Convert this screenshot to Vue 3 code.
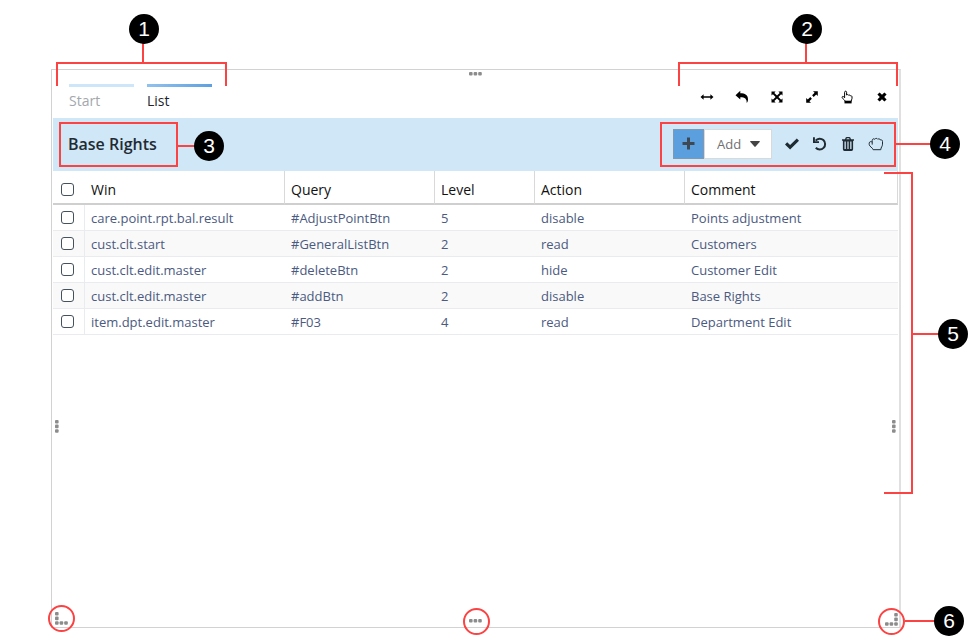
<script setup>
import { reactive, ref } from 'vue'

const tabs = ['Start', 'List']
const activeTab = ref('List')

const rows = reactive([
  { win: 'care.point.rpt.bal.result', query: '#AdjustPointBtn', level: 5, action: 'disable', comment: 'Points adjustment', checked: false },
  { win: 'cust.clt.start', query: '#GeneralListBtn', level: 2, action: 'read', comment: 'Customers', checked: false },
  { win: 'cust.clt.edit.master', query: '#deleteBtn', level: 2, action: 'hide', comment: 'Customer Edit', checked: false },
  { win: 'cust.clt.edit.master', query: '#addBtn', level: 2, action: 'disable', comment: 'Base Rights', checked: false },
  { win: 'item.dpt.edit.master', query: '#F03', level: 4, action: 'read', comment: 'Department Edit', checked: false }
])

const toggleAll = (event) => rows.forEach((row) => { row.checked = event.target.checked })

const handles = [
  { name: 'top', w: 13, h: 4, dots: [[0, 0], [1, 0], [2, 0]] },
  { name: 'bottom', w: 13, h: 4, dots: [[0, 0], [1, 0], [2, 0]] },
  { name: 'left', w: 4, h: 13, dots: [[0, 0], [0, 1], [0, 2]] },
  { name: 'right', w: 4, h: 13, dots: [[0, 0], [0, 1], [0, 2]] },
  { name: 'bottom-left', w: 13, h: 13, dots: [[0, 0], [0, 1], [0, 2], [1, 2], [2, 2]] },
  { name: 'bottom-right', w: 13, h: 13, dots: [[2, 0], [2, 1], [0, 2], [1, 2], [2, 2]] }
]
</script>

<template>
  <main class="page">
    <div class="frame">
      <section class="window">
        <header class="topbar">
          <nav class="tabs">
            <a
              v-for="tab in tabs"
              :key="tab"
              href="#"
              class="tab"
              :class="{ active: tab === activeTab }"
              @click.prevent="activeTab = tab"
            >{{ tab }}</a>
          </nav>
          <div class="controls">
            <button type="button" aria-label="Fit width">
              <svg width="14" height="14" viewBox="0 0 14 14"><path d="M0.5 7 3.6 4.2V6.2H10.4V4.2L13.5 7 10.4 9.8V7.8H3.6V9.8Z" /></svg>
            </button>
            <button type="button" aria-label="Back">
              <svg width="14" height="14" viewBox="0 0 14 14"><path d="M0.5 5.2 5.3 0.8V3.3C10 3.3 13 5 13 9.3 13 11 12.5 12.2 11.7 13 11.9 9 10 7.3 5.3 7.3V9.6Z" /></svg>
            </button>
            <button type="button" aria-label="Maximize">
              <svg width="14" height="14" viewBox="0 0 14 14"><path d="M1.5 1.5H5.6L4.3 2.9 7 5.6 9.7 2.9 8.4 1.5H12.5V5.6L11.1 4.3 8.4 7 11.1 9.7 12.5 8.4V12.5H8.4L9.7 11.1 7 8.4 4.3 11.1 5.6 12.5H1.5V8.4L2.9 9.7 5.6 7 2.9 4.3 1.5 5.6Z" /></svg>
            </button>
            <button type="button" aria-label="Expand">
              <svg width="14" height="14" viewBox="0 0 14 14"><path d="M8 1.2H12.8V6L11.2 4.4 8.7 6.9 7.1 5.3 9.6 2.8ZM6 12.8H1.2V8L2.8 9.6 5.3 7.1 6.9 8.7 4.4 11.2Z" /></svg>
            </button>
            <button type="button" aria-label="Pointer">
              <svg width="14" height="14" viewBox="0 0 14 14"><path class="line" d="M4.6 7.8V2.3C4.6 .8 6.6 .8 6.6 2.3V5C7.2 4.4 8.2 4.5 8.5 5.2 9.2 4.8 10 5 10.3 5.8 11.2 5.4 12 6 12 7V8.4C12 9.5 11.1 10.2 11.1 11.4H5C5 10.2 3.8 9.6 2.9 8.7 2 7.9 1.8 6.7 2.7 6.4 3.4 6.2 4 7 4.6 7.8Z" /><path d="M4.5 10.8H11.6V13.4H4.5Z" /></svg>
            </button>
            <button type="button" aria-label="Close">
              <svg width="14" height="14" viewBox="0 0 14 14"><path d="M4.6 2.4 7 4.8 9.4 2.4 11.6 4.6 9.2 7 11.6 9.4 9.4 11.6 7 9.2 4.6 11.6 2.4 9.4 4.8 7 2.4 4.6Z" /></svg>
            </button>
          </div>
        </header>

        <div class="toolbar">
          <h1>Base Rights</h1>
          <div class="actions">
            <button type="button" class="plus" aria-label="Add record">
              <svg width="13" height="13" viewBox="0 0 13 13"><path d="M5 0.5H8V5H12.5V8H8V12.5H5V8H0.5V5H5Z" /></svg>
            </button>
            <div class="picker">
              <select aria-label="Add mode"><option>Add</option></select>
              <svg width="10" height="6" viewBox="0 0 10 6"><path d="M0.6 0H9.4Q10.2 .3 9.6 1L5.6 5.6Q5 6.2 4.4 5.6L.4 1Q-.2 .3 .6 0Z" /></svg>
            </div>
            <button type="button" class="tool" aria-label="Apply">
              <svg width="16" height="16" viewBox="0 0 16 16"><path d="M1 8.4 3.2 6.2 6.1 9.1 12.8 2.5 15 4.7 6.1 13.5Z" /></svg>
            </button>
            <button type="button" class="tool" aria-label="Undo">
              <svg width="16" height="16" viewBox="0 0 16 16"><path class="arc" d="M3.6 4.6A5.4 5.4 0 1 1 3.8 11.8" /><path d="M1 1.2H2.9V5.2H7V7H1Z" /></svg>
            </button>
            <button type="button" class="tool" aria-label="Delete">
              <svg width="16" height="16" viewBox="0 0 16 16"><path fill-rule="evenodd" d="M2 3.2H5L5.7 1.6Q6 1 6.7 1H9.3Q10 1 10.3 1.6L11 3.2H14V4.8H13.1V13.3Q13.1 15 11.5 15H4.5Q2.9 15 2.9 13.3V4.8H2ZM6.4 3.2H9.6L9.1 2.2H6.9ZM4.5 5.6V13H5.8V5.6ZM7.4 5.6V13H8.6V5.6ZM10.2 5.6V13H11.5V5.6Z" /></svg>
            </button>
            <button type="button" class="tool" aria-label="Grab">
              <svg width="16" height="16" viewBox="0 0 16 16"><path class="line" d="M4.2 8.6V4.4C4.2 2.8 6 2.3 6.8 3.3 7.4 2.1 9.1 2.1 9.7 3.2 10.6 2.5 12 2.8 12.2 3.9 13.3 3.5 14.5 4.1 14.5 5.4V8.2C14.5 10.6 12.9 11 12.8 13.7H5.1C4.9 11.7 1.2 10.6 1.2 8.4V7.2C1.2 5.6 3.2 5.1 4.2 6.2" /></svg>
            </button>
          </div>
        </div>

        <table>
          <colgroup>
            <col class="c-check" /><col class="c-win" /><col class="c-query" /><col class="c-level" /><col class="c-action" /><col />
          </colgroup>
          <thead>
            <tr>
              <th class="check"><input type="checkbox" aria-label="Select all rows" @change="toggleAll" /></th>
              <th>Win</th>
              <th>Query</th>
              <th>Level</th>
              <th>Action</th>
              <th>Comment</th>
            </tr>
          </thead>
          <tbody>
            <tr v-for="(row, i) in rows" :key="i">
              <td class="check"><input v-model="row.checked" type="checkbox" :aria-label="'Select ' + row.win" /></td>
              <td>{{ row.win }}</td>
              <td>{{ row.query }}</td>
              <td>{{ row.level }}</td>
              <td>{{ row.action }}</td>
              <td>{{ row.comment }}</td>
            </tr>
          </tbody>
        </table>
      </section>

      <svg
        v-for="handle in handles"
        :key="handle.name"
        class="handle"
        :class="handle.name"
        :width="handle.w"
        :height="handle.h"
      >
        <rect v-for="(dot, i) in handle.dots" :key="i" :x="dot[0] * 4.6" :y="dot[1] * 4.6" width="3.6" height="3.6" rx="1" />
      </svg>

      <div class="mark bracket-1"></div>
      <div class="mark stem-1"></div>
      <span class="badge badge-1">1</span>

      <div class="mark bracket-2"></div>
      <div class="mark stem-2"></div>
      <span class="badge badge-2">2</span>

      <div class="mark box-3"></div>
      <div class="mark stem-3"></div>
      <span class="badge badge-3">3</span>

      <div class="mark box-4"></div>
      <div class="mark stem-4"></div>
      <span class="badge badge-4">4</span>

      <div class="mark bracket-5"></div>
      <div class="mark stem-5"></div>
      <span class="badge badge-5">5</span>

      <div class="mark ring ring-left"></div>
      <div class="mark ring ring-middle"></div>
      <div class="mark ring ring-right"></div>
      <div class="mark stem-6"></div>
      <span class="badge badge-6">6</span>
    </div>
  </main>
</template>

<style>
body {
  margin: 0;
  background: #fff;
}
</style>

<style scoped>
* {
  box-sizing: border-box;
}

.page {
  display: flex;
  min-height: 100vh;
  padding: 69px 67px 14px 51px;
  font-family: "Open Sans", "Noto Sans", sans-serif;
  font-size: 13px;
  overflow: hidden;
}

.frame {
  position: relative;
  display: flex;
  flex: 1;
  min-width: 0;
}

.window {
  flex: 1;
  min-width: 0;
  padding: 0 1px;
  border: 1px solid #d2d2d2;
  border-right: 2px solid #e0e0e0;
}

button {
  display: flex;
  align-items: center;
  justify-content: center;
  padding: 0;
  border: 0;
  background: none;
  color: inherit;
}

/* Top bar */
.topbar {
  display: flex;
  justify-content: space-between;
  height: 48px;
  padding-left: 16px;
  color: #000;
}

.tabs {
  display: flex;
  gap: 13px;
  padding-top: 14px;
}

.tab {
  width: 65px;
  height: 30px;
  padding-top: 4px;
  border-top: 3px solid #cde6f9;
  color: #a3a8ad;
  font-size: 14px;
  line-height: 19px;
  text-decoration: none;
}

.tab.active {
  border-image: linear-gradient(90deg, #93c3ee, #5b9fdf) 3;
  color: #1d262c;
}

.controls {
  display: flex;
  gap: 3px;
  padding-top: 11px;
}

.controls button {
  width: 32px;
  height: 32px;
}

svg {
  display: block;
  fill: currentColor;
}

.line {
  fill: none;
  stroke: currentColor;
  stroke-width: 1;
  stroke-linejoin: round;
}

.arc {
  fill: none;
  stroke: currentColor;
  stroke-width: 2;
}

/* Toolbar */
.toolbar {
  display: flex;
  align-items: center;
  justify-content: space-between;
  height: 53px;
  padding: 0 8px 2px 15px;
  background: #d0e7f7;
  color: #1f2b33;
}

h1 {
  margin: 0;
  font-size: 16px;
  font-weight: 600;
  line-height: 24px;
}

.actions {
  display: flex;
  align-items: center;
}

.plus {
  width: 31px;
  height: 30px;
  border: 1px solid #8199b0;
  background: #5c9fdf;
  color: #3d4852;
}

.picker {
  position: relative;
  width: 68px;
  height: 30px;
  margin-right: 6px;
}

.picker select {
  width: 100%;
  height: 100%;
  padding: 0 12px;
  border: 1px solid #d9d9d9;
  border-radius: 0;
  background: #fff;
  color: #707070;
  font: inherit;
  appearance: none;
}

.picker svg {
  position: absolute;
  top: 12px;
  right: 12px;
  color: #444;
  pointer-events: none;
}

.tool {
  width: 28px;
  height: 30px;
}

/* Table */
table {
  width: 100%;
  border-collapse: separate;
  border-spacing: 0;
  table-layout: fixed;
}

.c-check {
  width: 32px;
}

.c-win {
  width: 200px;
}

.c-query,
.c-action {
  width: 150px;
}

.c-level {
  width: 100px;
}

th,
td {
  padding: 0 6px;
  overflow: hidden;
  text-align: left;
  white-space: nowrap;
}

th {
  height: 34px;
  padding-top: 4px;
  border-right: 1px solid #d9d9d9;
  border-bottom: 2px solid #cfcfcf;
  color: #111;
  font-size: 14px;
  font-weight: 400;
}

td {
  height: 26px;
  border-bottom: 1px solid #e9ebef;
  color: #4b5a80;
}

tbody tr:nth-child(even) {
  background: #f9f9f9;
}

.check {
  padding-left: 8px;
}

th.check {
  border-right: 0;
}

td.check {
  border-right: 1px solid #e9ebef;
}

.check input {
  display: block;
  width: 13px;
  height: 13px;
  margin: 0;
  border: 1px solid #44515e;
  border-radius: 3px;
  background: #fff;
  appearance: none;
}

.check input:checked {
  background: #5c9fdf;
}

/* Resize handles */
.handle {
  position: absolute;
  fill: #8c8c8c;
}

.top {
  top: 3px;
  left: 50%;
  margin-left: -7px;
}

.bottom {
  bottom: 5px;
  left: 50%;
  margin-left: -7px;
}

.left {
  top: 351px;
  left: 4px;
}

.right {
  top: 351px;
  right: 5px;
}

.bottom-left {
  bottom: 3px;
  left: 4px;
}

.bottom-right {
  right: 3px;
  bottom: 2px;
}

/* Callouts */
.mark {
  position: absolute;
  border: 0 solid #fb4343;
  pointer-events: none;
}

.badge {
  position: absolute;
  width: 30px;
  height: 30px;
  border-radius: 50%;
  background: #000;
  color: #fff;
  font-family: "Liberation Sans", Arial, sans-serif;
  font-size: 21px;
  line-height: 30px;
  text-align: center;
}

.bracket-1 {
  top: -7px;
  left: 5px;
  width: 171px;
  height: 24px;
  border-width: 2px 2px 0;
}

.stem-1 {
  top: -26px;
  left: 91px;
  height: 20px;
  border-left-width: 2px;
}

.badge-1 {
  top: -55px;
  left: 78px;
}

.bracket-2 {
  top: -7px;
  right: 3px;
  width: 220px;
  height: 24px;
  border-width: 2px 2px 0;
}

.stem-2 {
  top: -26px;
  right: 94px;
  height: 20px;
  border-left-width: 2px;
}

.badge-2 {
  top: -55px;
  right: 79px;
}

.box-3 {
  top: 53px;
  left: 8px;
  width: 119px;
  height: 45px;
  border-width: 2px;
}

.stem-3 {
  top: 76px;
  left: 126px;
  width: 20px;
  border-top-width: 2px;
}

.badge-3 {
  top: 62px;
  left: 143px;
}

.box-4 {
  top: 53px;
  right: 5px;
  width: 236px;
  height: 45px;
  border-width: 2px;
}

.stem-4 {
  top: 74px;
  right: -30px;
  width: 35px;
  border-top-width: 2px;
}

.badge-4 {
  top: 60px;
  right: -59px;
}

.bracket-5 {
  top: 103px;
  right: -12px;
  width: 29px;
  height: 322px;
  border-width: 2px 2px 2px 0;
}

.stem-5 {
  top: 264px;
  right: -40px;
  width: 28px;
  border-top-width: 2px;
}

.badge-5 {
  top: 250px;
  right: -67px;
}

.ring {
  width: 27px;
  height: 27px;
  border-width: 2px;
  border-radius: 50%;
}

.ring-left {
  bottom: -4px;
  left: -3px;
}

.ring-middle {
  bottom: -7px;
  left: 50%;
  margin-left: -13px;
}

.ring-right {
  right: -4px;
  bottom: -7px;
}

.stem-6 {
  right: -36px;
  bottom: 6px;
  width: 32px;
  border-top-width: 2px;
}

.badge-6 {
  right: -63px;
  bottom: -8px;
}
</style>
